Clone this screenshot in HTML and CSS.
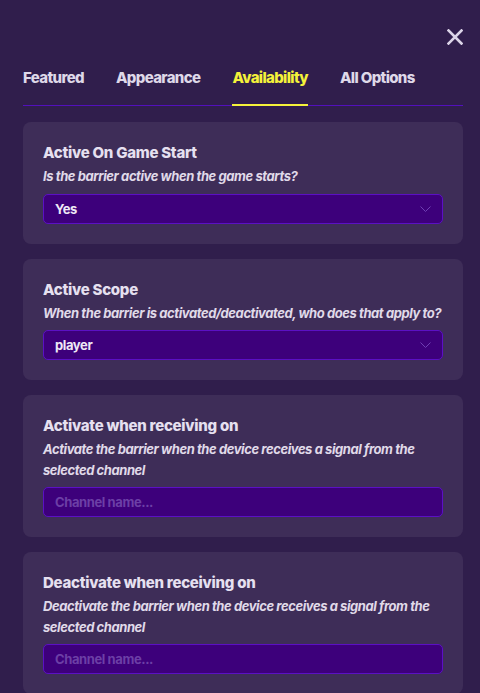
FILE: index.html
```html
<!DOCTYPE html>
<html lang="en">
<head>
<meta charset="utf-8">
<title>Barrier options</title>
<link rel="stylesheet" href="styles.css">
</head>
<body>
<div class="panel">
  <div class="topbar">
    <button class="close" aria-label="Close">
      <svg width="16" height="16" viewBox="0 0 16 16"><path d="M1.5 1.5 L14.5 14.5 M14.5 1.5 L1.5 14.5" stroke="#dcd5e8" stroke-width="2.6" stroke-linecap="square" fill="none"/></svg>
    </button>
  </div>
  <nav class="tabs">
    <span class="tab">Featured</span>
    <span class="tab">Appearance</span>
    <span class="tab active">Availability</span>
    <span class="tab">All Options</span>
  </nav>
  <div class="cards">
    <section class="card">
      <div class="title">Active On Game Start</div>
      <div class="desc">Is the barrier active when the game starts?</div>
      <div class="field select"><span>Yes</span><svg class="chev" width="11" height="6" viewBox="0 0 11 6"><path d="M0.5 0.5 L5.5 5.5 L10.5 0.5" stroke="#6f3fb4" stroke-width="1" fill="none"/></svg></div>
    </section>
    <section class="card">
      <div class="title">Active Scope</div>
      <div class="desc">When the barrier is activated/deactivated, who does that apply to?</div>
      <div class="field select"><span>player</span><svg class="chev" width="11" height="6" viewBox="0 0 11 6"><path d="M0.5 0.5 L5.5 5.5 L10.5 0.5" stroke="#6f3fb4" stroke-width="1" fill="none"/></svg></div>
    </section>
    <section class="card">
      <div class="title">Activate when receiving on</div>
      <div class="desc">Activate the barrier when the device receives a signal from the selected channel</div>
      <div class="field input"><span class="ph">Channel name...</span></div>
    </section>
    <section class="card">
      <div class="title">Deactivate when receiving on</div>
      <div class="desc">Deactivate the barrier when the device receives a signal from the selected channel</div>
      <div class="field input"><span class="ph">Channel name...</span></div>
    </section>
  </div>
</div>
</body>
</html>
```
FILE: styles.css
```css
html, body {
  margin: 0;
  padding: 0;
  background: #301e4c;
  height: 100%;
  overflow: hidden;
}
body {
  font-family: Inter, "Noto Sans", sans-serif;
  color: #e6e0f0;
}
.panel {
  padding: 0 17px 0 23px;
}
.topbar {
  display: flex;
  justify-content: flex-end;
  padding-top: 29px;
}
.close {
  width: 16px;
  height: 16px;
  padding: 0;
  border: 0;
  background: none;
  display: block;
}
.close svg { display: block; }
.tabs {
  margin-top: 23px;
  display: flex;
  gap: 32px;
  border-bottom: 1px solid #5210bc;
}
.tab {
  position: relative;
  font-size: 15px;
  font-weight: 800;
  line-height: 20px;
  letter-spacing: -0.65px;
  padding-bottom: 17px;
  color: #ded8e8;
}
.tab.active {
  color: #f4f23a;
}
.tab.active::after {
  content: "";
  position: absolute;
  left: 0;
  right: 0;
  bottom: -1px;
  height: 2px;
  background: #f4f23a;
}
.cards {
  margin-top: 16px;
  display: flex;
  flex-direction: column;
  gap: 15px;
}
.card {
  background: #3e2d58;
  border-radius: 8px;
  padding: 20px;
}
.title {
  font-size: 15px;
  font-weight: 800;
  line-height: 22px;
  letter-spacing: -0.25px;
  color: #e6e0f0;
}
.desc {
  margin-top: 2px;
  font-size: 13px;
  font-weight: 700;
  font-style: italic;
  line-height: 20.5px;
  letter-spacing: -0.42px;
  color: #e0dae9;
}
.field {
  margin-top: 7px;
  height: 30px;
  box-sizing: border-box;
  background: #3d007b;
  border: 1px solid #5b10c4;
  border-radius: 5px;
  display: flex;
  align-items: center;
  justify-content: space-between;
  padding: 0 11px;
  font-size: 13px;
  font-weight: 700;
  letter-spacing: -0.4px;
  color: #eee8f6;
}
.chev { display: block; }
.ph {
  color: #6c3fa6;
}
```
